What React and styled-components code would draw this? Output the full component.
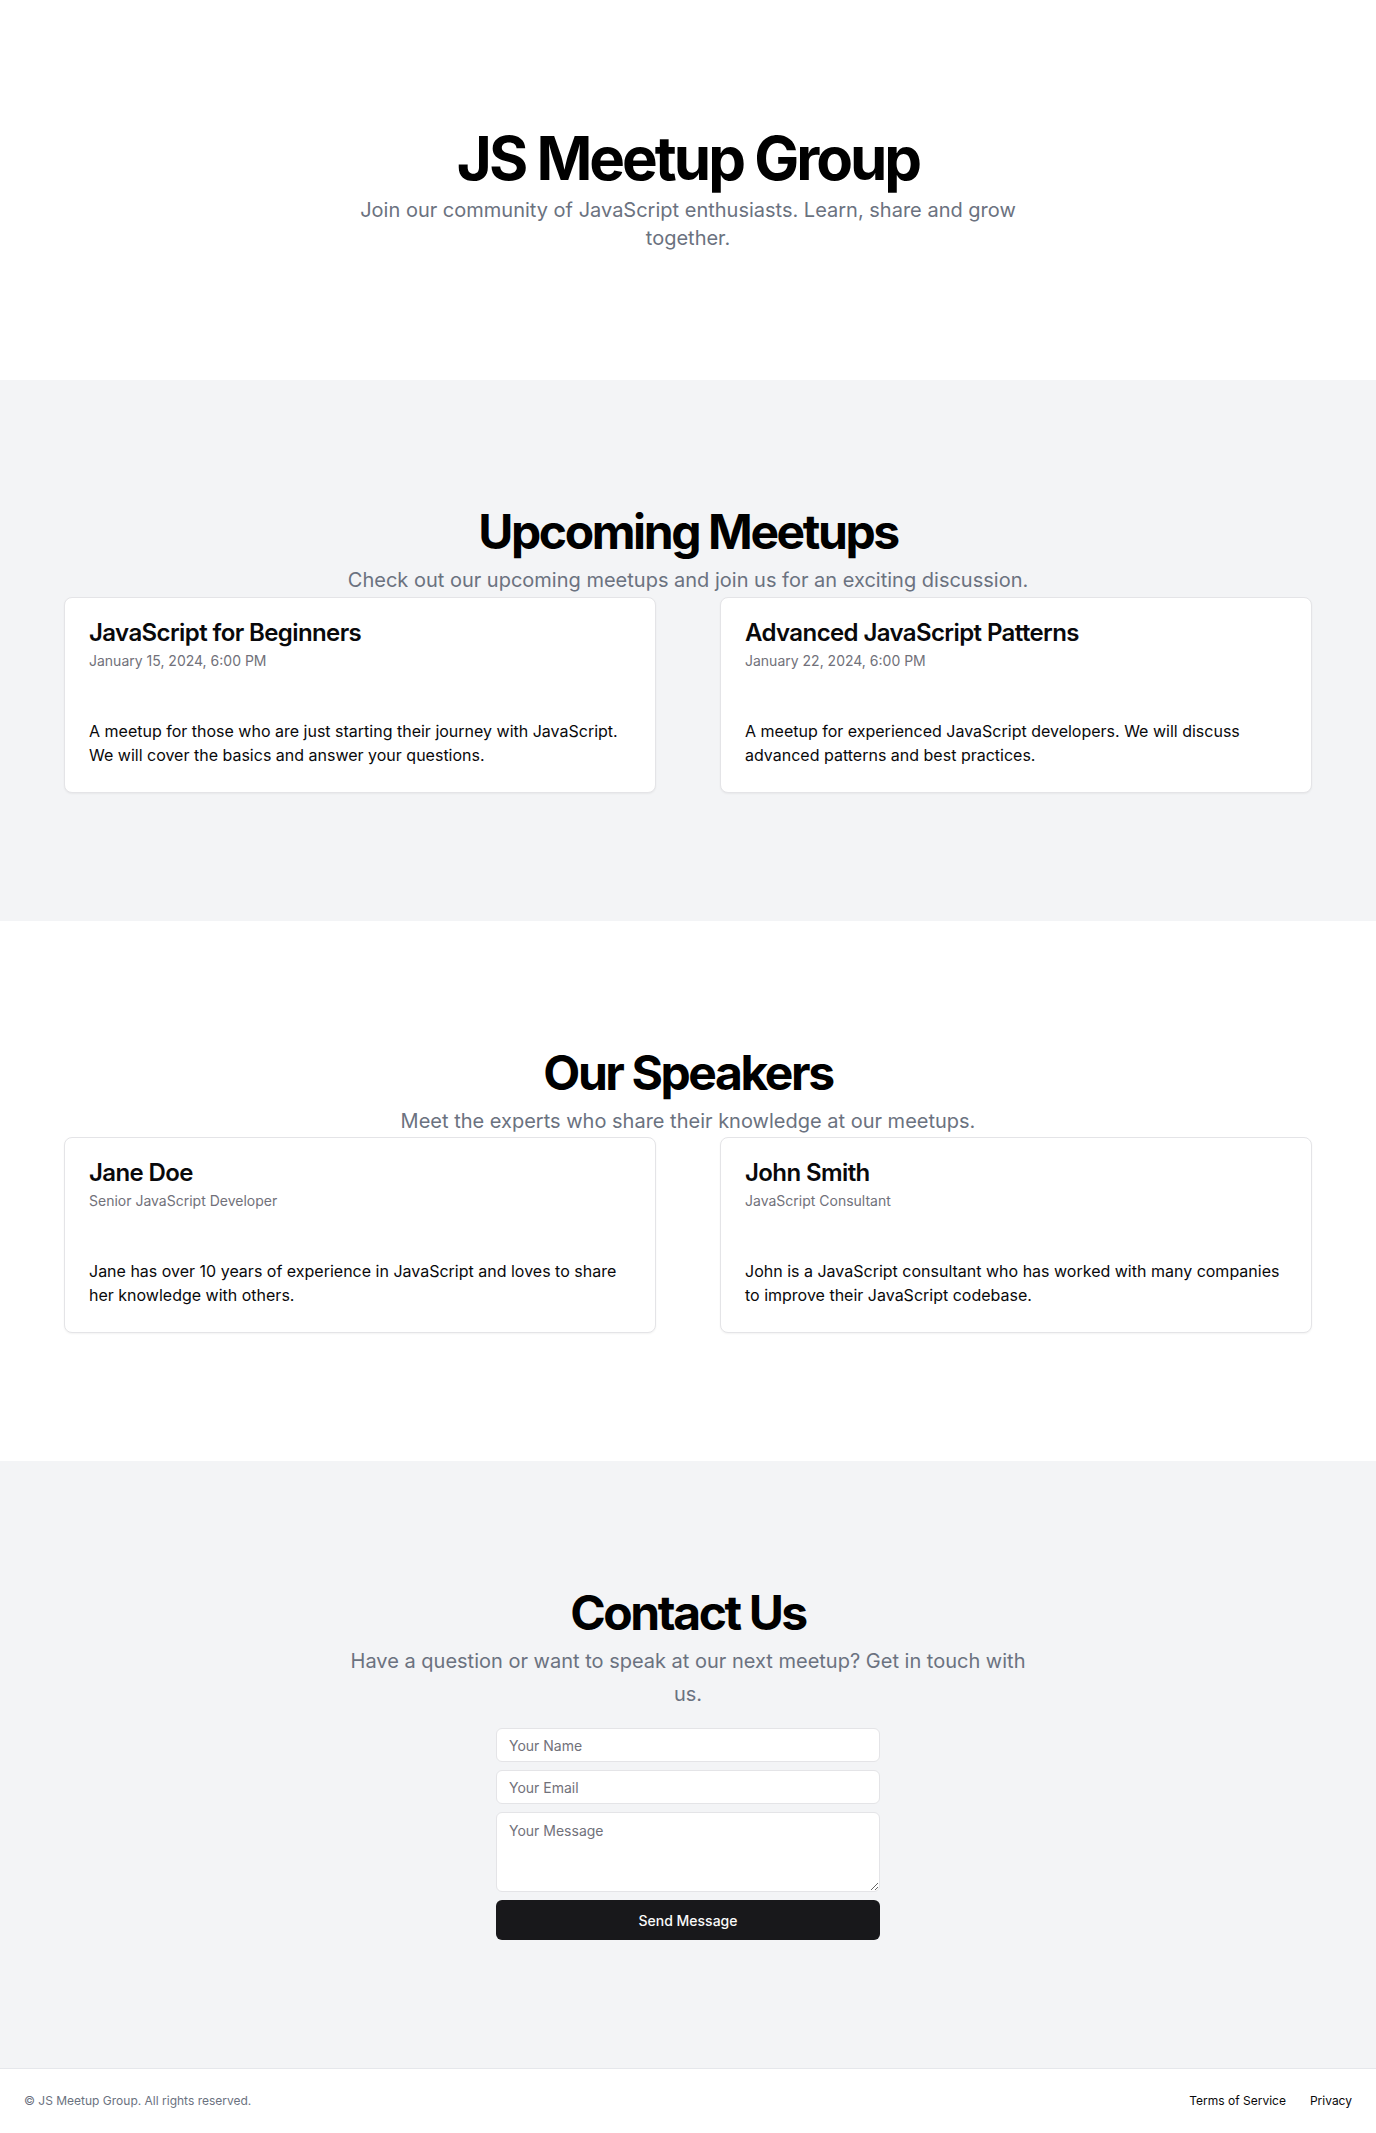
import React from "react";
import styled, { createGlobalStyle } from "styled-components";

const GlobalStyle = createGlobalStyle`
  * {
    box-sizing: border-box;
  }
  body {
    margin: 0;
    font-family: Inter, "Noto Sans", sans-serif;
    color: #09090b;
    background: #ffffff;
    -webkit-font-smoothing: antialiased;
  }
`;

const meetups = [
  {
    title: "JavaScript for Beginners",
    meta: "January 15, 2024, 6:00 PM",
    text: "A meetup for those who are just starting their journey with JavaScript. We will cover the basics and answer your questions.",
  },
  {
    title: "Advanced JavaScript Patterns",
    meta: "January 22, 2024, 6:00 PM",
    text: "A meetup for experienced JavaScript developers. We will discuss advanced patterns and best practices.",
  },
];

const speakers = [
  {
    title: "Jane Doe",
    meta: "Senior JavaScript Developer",
    text: "Jane has over 10 years of experience in JavaScript and loves to share her knowledge with others.",
  },
  {
    title: "John Smith",
    meta: "JavaScript Consultant",
    text: "John is a JavaScript consultant who has worked with many companies to improve their JavaScript codebase.",
  },
];

const App = () => {
  return (
    <Page>
      <GlobalStyle />
      <Section>
        <Inner>
          <Heading>
            <HeroTitle>JS Meetup Group</HeroTitle>
            <Lead>
              Join our community of JavaScript enthusiasts. Learn, share and
              grow together.
            </Lead>
          </Heading>
        </Inner>
      </Section>

      <Section $gray>
        <Inner>
          <Heading>
            <SectionTitle>Upcoming Meetups</SectionTitle>
            <Lead $relaxed>
              Check out our upcoming meetups and join us for an exciting
              discussion.
            </Lead>
          </Heading>
          <CardGrid>
            {meetups.map(m => (
              <Card key={m.title}>
                <CardHeader>
                  <CardTitle>{m.title}</CardTitle>
                  <CardMeta>{m.meta}</CardMeta>
                </CardHeader>
                <CardBody>{m.text}</CardBody>
              </Card>
            ))}
          </CardGrid>
        </Inner>
      </Section>

      <Section>
        <Inner>
          <Heading>
            <SectionTitle>Our Speakers</SectionTitle>
            <Lead $relaxed>
              Meet the experts who share their knowledge at our meetups.
            </Lead>
          </Heading>
          <CardGrid>
            {speakers.map(s => (
              <Card key={s.title}>
                <CardHeader>
                  <CardTitle>{s.title}</CardTitle>
                  <CardMeta>{s.meta}</CardMeta>
                </CardHeader>
                <CardBody>{s.text}</CardBody>
              </Card>
            ))}
          </CardGrid>
        </Inner>
      </Section>

      <Section $gray>
        <Inner>
          <Heading>
            <SectionTitle>Contact Us</SectionTitle>
            <Lead $relaxed>
              Have a question or want to speak at our next meetup? Get in touch
              with us.
            </Lead>
          </Heading>
          <Form onSubmit={e => e.preventDefault()}>
            <Input type="text" placeholder="Your Name" />
            <Input type="email" placeholder="Your Email" />
            <TextArea placeholder="Your Message" />
            <SubmitButton type="submit">Send Message</SubmitButton>
          </Form>
        </Inner>
      </Section>

      <Footer>
        <Copy>© JS Meetup Group. All rights reserved.</Copy>
        <FooterNav>
          <FooterLink href="#">Terms of Service</FooterLink>
          <FooterLink href="#">Privacy</FooterLink>
        </FooterNav>
      </Footer>
    </Page>
  );
};

export default App;

const Page = styled.div`
  display: flex;
  flex-direction: column;
  min-height: 100vh;
`;

const Section = styled.section`
  padding: 128px 0;
  background: ${p => (p.$gray ? "#f3f4f6" : "#ffffff")};
`;

const Inner = styled.div`
  display: flex;
  flex-direction: column;
  align-items: center;
  padding: 0 64px;
  text-align: center;
`;

const Heading = styled.div`
  display: flex;
  flex-direction: column;
  align-items: center;
  gap: 8px;
`;

const HeroTitle = styled.h1`
  margin: 0;
  font-size: 60px;
  line-height: 1;
  font-weight: 700;
  letter-spacing: -0.05em;
  color: #000;
`;

const SectionTitle = styled.h2`
  margin: 0;
  font-size: 48px;
  line-height: 1;
  font-weight: 700;
  letter-spacing: -0.05em;
  color: #000;
`;

const Lead = styled.p`
  margin: 0;
  max-width: 700px;
  font-size: 20px;
  line-height: ${p => (p.$relaxed ? 1.625 : "28px")};
  color: #6b7280;
`;

const CardGrid = styled.div`
  display: grid;
  grid-template-columns: repeat(2, 1fr);
  gap: 64px;
  width: 100%;
  text-align: left;
`;

const Card = styled.div`
  background: #ffffff;
  border: 1px solid #e4e4e7;
  border-radius: 8px;
  box-shadow: 0 1px 2px rgba(0, 0, 0, 0.05);
`;

const CardHeader = styled.div`
  display: flex;
  flex-direction: column;
  gap: 6px;
  padding: 23px 24px 24px;
`;

const CardTitle = styled.h3`
  margin: 0;
  font-size: 24px;
  line-height: 1;
  font-weight: 600;
  letter-spacing: -0.025em;
`;

const CardMeta = styled.p`
  margin: 0;
  font-size: 14px;
  line-height: 20px;
  color: #71717a;
`;

const CardBody = styled.p`
  margin: 0;
  padding: 24px 24px 25px;
  font-size: 16px;
  line-height: 24px;
`;

const Form = styled.form`
  display: flex;
  flex-direction: column;
  gap: 8px;
  width: 100%;
  max-width: 384px;
  margin-top: 18px;
  text-align: left;
`;

const Input = styled.input`
  height: 34px;
  padding: 0 12px;
  border: 1px solid #e4e4e7;
  border-radius: 6px;
  background: #ffffff;
  font-family: inherit;
  font-size: 14px;
  color: #09090b;
  &::placeholder {
    color: #71717a;
  }
`;

const TextArea = styled.textarea`
  height: 80px;
  padding: 8px 12px;
  border: 1px solid #e4e4e7;
  border-radius: 6px;
  background: #ffffff;
  font-family: inherit;
  font-size: 14px;
  line-height: 20px;
  color: #09090b;
  &::placeholder {
    color: #71717a;
  }
`;

const SubmitButton = styled.button`
  height: 40px;
  border: none;
  border-radius: 6px;
  background: #18181b;
  color: #fafafa;
  font-family: inherit;
  font-size: 14px;
  font-weight: 500;
  cursor: pointer;
`;

const Footer = styled.footer`
  display: flex;
  align-items: center;
  justify-content: space-between;
  padding: 24px;
  border-top: 1px solid #e5e7eb;
  background: #ffffff;
`;

const Copy = styled.p`
  margin: 0;
  font-size: 12px;
  line-height: 16px;
  color: #6b7280;
`;

const FooterNav = styled.nav`
  display: flex;
  gap: 24px;
`;

const FooterLink = styled.a`
  font-size: 12px;
  line-height: 16px;
  color: #09090b;
  text-decoration: none;
`;
